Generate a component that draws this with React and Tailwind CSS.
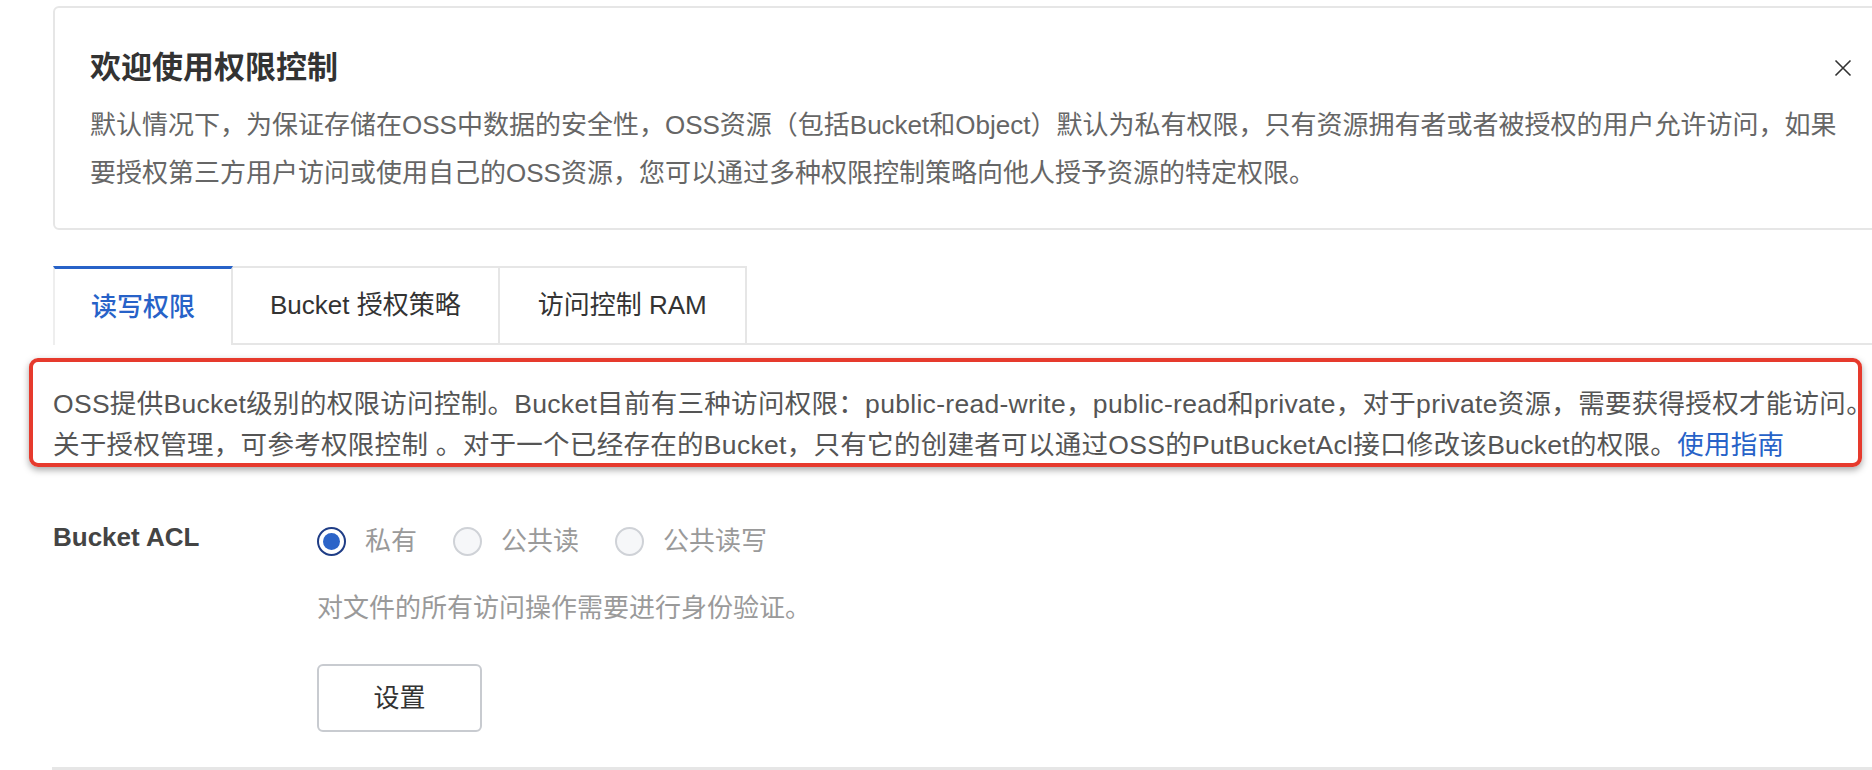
import React from "react";

const FONT = {
  fontFamily:
    '"Liberation Sans", "Noto Sans CJK SC", "Noto Sans", sans-serif',
};

function Radio({ checked }) {
  if (checked) {
    return (
      <span className="flex h-[29px] w-[29px] shrink-0 items-center justify-center rounded-full border-2 border-[#1f3d86] bg-white">
        <span className="block h-[17px] w-[17px] rounded-full bg-[#2c64c8]" />
      </span>
    );
  }
  return (
    <span className="block h-[29px] w-[29px] shrink-0 rounded-full border-2 border-[#cfd2d7] bg-[#f6f7f9]" />
  );
}

export default function App() {
  return (
    <div
      className="relative h-[770px] w-[1872px] overflow-hidden bg-white"
      style={FONT}
    >
      {/* Welcome card */}
      <div className="ml-[53px] mt-[6px] w-[1827px] rounded-md border-2 border-[#e6e6e6] pb-[31px] pl-[35px] pr-[26px] pt-[40px]">
        <div className="flex h-[40px] items-center justify-between">
          <h1 className="text-[31px] font-semibold leading-[40px] text-[#333]">
            欢迎使用权限控制
          </h1>
          <svg
            width="18"
            height="18"
            viewBox="0 0 18 18"
            className="shrink-0"
          >
            <path
              d="M1.5 1.5 L16.5 16.5 M16.5 1.5 L1.5 16.5"
              stroke="#333"
              strokeWidth="1.6"
              fill="none"
            />
          </svg>
        </div>
        <div className="mt-[13px] text-[26px] leading-[48px] text-[#666]">
          <div className="whitespace-nowrap">
            默认情况下，为保证存储在OSS中数据的安全性，OSS资源（包括Bucket和Object）默认为私有权限，只有资源拥有者或者被授权的用户允许访问，如果
          </div>
          <div className="whitespace-nowrap">
            要授权第三方用户访问或使用自己的OSS资源，您可以通过多种权限控制策略向他人授予资源的特定权限。
          </div>
        </div>
      </div>

      {/* Tabs */}
      <div className="ml-[53px] mt-[36px] flex items-stretch">
        <div className="flex h-[79px] items-center border-l-2 border-r-2 border-t-[3px] border-l-[#eeeeee] border-r-[#e6e6e6] border-t-[#2762c8] bg-white px-[36px] text-[26px] font-medium text-[#2762c8]">
          读写权限
        </div>
        <div className="flex h-[79px] items-center border-b-2 border-r-2 border-t-2 border-[#e6e6e6] px-[37px] text-[26px] text-[#333]">
          Bucket 授权策略
        </div>
        <div className="flex h-[79px] items-center border-b-2 border-r-2 border-t-2 border-[#e6e6e6] px-[38px] text-[26px] text-[#333]">
          访问控制 RAM
        </div>
        <div className="flex-1 border-b-2 border-[#e6e6e6]" />
      </div>

      {/* Highlighted description */}
      <div className="ml-[29px] mt-[13px] h-[109px] w-[1833px] rounded-[9px] border-4 border-[#e63a2d] pl-[20px] pt-[22px] shadow-[0_3px_7px_rgba(0,0,0,0.35)]">
        <div className="text-[26.5px] leading-[41px] tracking-[0.3px] text-[#555]">
          <div className="whitespace-nowrap">
            OSS提供Bucket级别的权限访问控制。Bucket目前有三种访问权限：public-read-write，public-read和private，对于private资源，需要获得授权才能访问。
          </div>
          <div className="whitespace-nowrap">
            关于授权管理，可参考权限控制 。对于一个已经存在的Bucket，只有它的创建者可以通过OSS的PutBucketAcl接口修改该Bucket的权限。
            <span className="text-[#2762c8]">使用指南</span>
          </div>
        </div>
      </div>

      {/* Bucket ACL */}
      <div className="ml-[53px] mt-[54px] flex">
        <div className="w-[264px] text-[26px] font-bold leading-[32px] text-[#444]">
          Bucket ACL
        </div>
        <div className="flex flex-col">
          <div className="flex h-[40px] items-center text-[26px] text-[#9a9a9a]">
            <Radio checked />
            <span className="ml-[19px]">私有</span>
            <span className="ml-[36px]">
              <Radio />
            </span>
            <span className="ml-[19px]">公共读</span>
            <span className="ml-[36px]">
              <Radio />
            </span>
            <span className="ml-[19px]">公共读写</span>
          </div>
          <div className="mt-[27px] text-[26px] leading-[40px] text-[#9a9a9a]">
            对文件的所有访问操作需要进行身份验证。
          </div>
          <button className="mt-[36px] flex h-[68px] w-[165px] items-center justify-center rounded-md border-2 border-[#c8cbd0] bg-white text-[26px] text-[#333]">
            设置
          </button>
        </div>
      </div>

      <div className="ml-[52px] mt-[35px] h-[3px] bg-[#e6e6e6]" />
    </div>
  );
}
